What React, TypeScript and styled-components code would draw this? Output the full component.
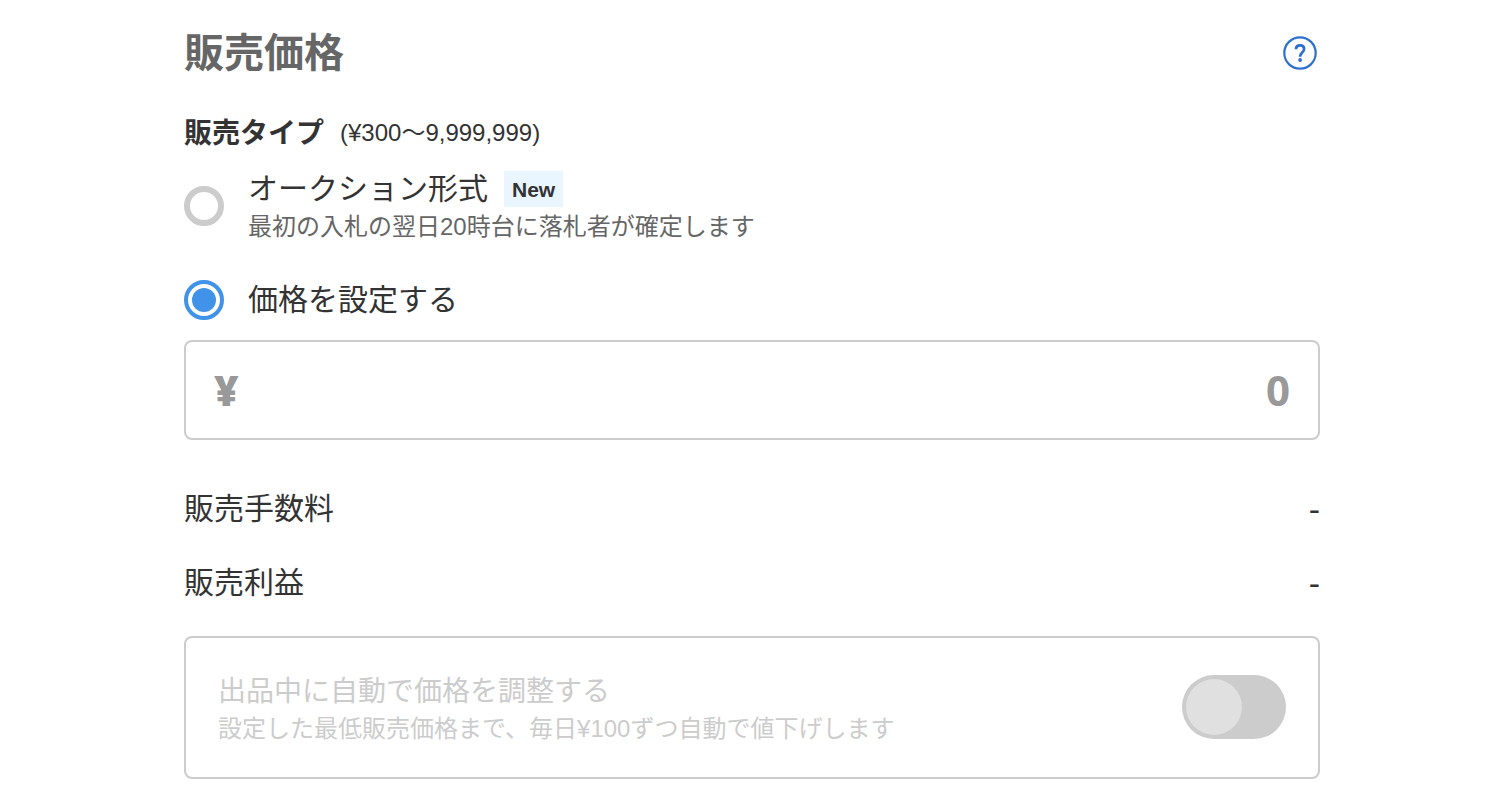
import React, { useState } from "react";
import styled, { createGlobalStyle } from "styled-components";

const GlobalStyle = createGlobalStyle`
  *, *::before, *::after { box-sizing: border-box; }
  body {
    margin: 0;
    background: #fff;
    color: #333;
    font-family: "Liberation Sans", "Noto Sans CJK JP", sans-serif;
    -webkit-font-smoothing: antialiased;
  }
`;

const Page = styled.main`
  padding: 24px 170px 8px 184px;
`;

const Header = styled.header`
  display: flex;
  align-items: center;
  justify-content: space-between;
  height: 58px;
`;

const Title = styled.h2`
  margin: 0;
  font-size: 40px;
  line-height: 58px;
  font-weight: 700;
  color: #666;
`;

const HelpLink = styled.a`
  display: flex;
  color: #2d70ce;
`;

const Fieldset = styled.fieldset`
  margin: 0;
  padding: 0;
  border: 0;
  min-width: 0;
`;

const Legend = styled.legend`
  display: flex;
  align-items: center;
  gap: 16px;
  padding: 32px 0 13px;
  font-size: 28px;
  line-height: 40px;
  font-weight: 700;
`;

const Range = styled.span`
  font-size: 24px;
  line-height: 38px;
  padding-bottom: 2px;
  font-weight: 400;
`;

const Option = styled.label<{ $spaced?: boolean }>`
  display: flex;
  align-items: center;
  gap: 24px;
  margin-bottom: ${(p) => (p.$spaced ? 35 : 20)}px;
  cursor: pointer;
`;

const Radio = styled.input`
  appearance: none;
  flex: none;
  width: 40px;
  height: 40px;
  margin: 0;
  border: 6px solid #ccc;
  border-radius: 50%;
  background: #fff;

  &:checked {
    border: 4px solid #4093e9;
    padding: 4px;
    background: #4093e9 content-box;
  }
`;

const OptionText = styled.span`
  display: flex;
  flex-direction: column;
  padding-top: 2px;
`;

const OptionTitle = styled.span`
  display: flex;
  align-items: center;
  gap: 16px;
  font-size: 30px;
  line-height: 40px;
`;

const Badge = styled.span`
  padding: 2px 8px 0;
  background: #e9f6ff;
  font-size: 21px;
  line-height: 34px;
  font-weight: 700;
`;

const Hint = styled.span`
  font-size: 24px;
  line-height: 36px;
  color: #666;
`;

const PriceField = styled.label`
  display: flex;
  align-items: center;
  height: 100px;
  padding: 0 28px 2px;
  border: 2px solid #ccc;
  border-radius: 8px;
  font-family: "Open Sans", sans-serif;
  font-size: 42px;
  font-weight: 700;
  color: #999;
`;

const Currency = styled.span`
  font-weight: 800;
`;

const PriceInput = styled.input`
  flex: 1;
  min-width: 0;
  height: 60px;
  padding: 0;
  border: 0;
  outline: 0;
  background: transparent;
  color: #333;
  font: inherit;
  text-align: right;

  &::placeholder {
    color: #999;
    opacity: 1;
  }
`;

const Summary = styled.dl`
  display: flex;
  flex-direction: column;
  gap: 30px;
  margin: 47px 0 31px;
  font-size: 30px;
  line-height: 44px;
`;

const SummaryRow = styled.div`
  display: flex;
  justify-content: space-between;
`;

const Term = styled.dt`
  margin: 0;
`;

const Amount = styled.dd`
  margin: 0;
  font-size: 34px;
`;

const AdjustPanel = styled.label`
  display: flex;
  align-items: center;
  justify-content: space-between;
  gap: 32px;
  padding: 30px 32px 31px;
  border: 2px solid #ccc;
  border-radius: 8px;
  color: #ccc;
`;

const AdjustText = styled.span`
  display: flex;
  flex-direction: column;
  padding-top: 4px;
  font-size: 28px;
  line-height: 40px;
`;

const AdjustHint = styled.span`
  font-size: 24px;
  line-height: 34px;
`;

const Switch = styled.input`
  appearance: none;
  flex: none;
  width: 104px;
  height: 64px;
  margin: 0;
  padding: 4px;
  border-radius: 32px;
  background: #ccc;

  &::before {
    content: "";
    display: block;
    width: 56px;
    height: 56px;
    border-radius: 50%;
    background: #e0e0e0;
  }
`;

function HelpIcon() {
  return (
    <svg width="40" height="40" viewBox="0 0 40 40" fill="none" stroke="currentColor" aria-hidden="true">
      <circle cx="20" cy="20" r="15.7" strokeWidth="2.2" />
      <path d="M16 16.300C16 13.900 17.700 12.400 20.100 12.400C22.600 12.400 24.100 13.900 24.100 15.900C24.100 17.700 23.200 18.600 22 19.700C20.700 20.900 20.100 21.600 20.100 23.700" strokeWidth="2.800" />
      <circle cx="20.100" cy="27" r="1.900" fill="currentColor" stroke="none" />
    </svg>
  );
}

export default function App() {
  const [type, setType] = useState("fixed");
  const [price, setPrice] = useState("");

  return (
    <>
      <GlobalStyle />
      <Page>
        <Header>
          <Title>販売価格</Title>
          <HelpLink href="#help" aria-label="ヘルプ">
            <HelpIcon />
          </HelpLink>
        </Header>

        <Fieldset>
          <Legend>
            販売タイプ <Range>(¥300〜9,999,999)</Range>
          </Legend>
          <Option $spaced>
            <Radio
              type="radio"
              name="type"
              checked={type === "auction"}
              onChange={() => setType("auction")}
            />
            <OptionText>
              <OptionTitle>
                オークション形式 <Badge>New</Badge>
              </OptionTitle>
              <Hint>最初の入札の翌日20時台に落札者が確定します</Hint>
            </OptionText>
          </Option>
          <Option>
            <Radio
              type="radio"
              name="type"
              checked={type === "fixed"}
              onChange={() => setType("fixed")}
            />
            <OptionTitle>価格を設定する</OptionTitle>
          </Option>
        </Fieldset>

        <PriceField>
          <Currency>¥</Currency>
          <PriceInput
            inputMode="numeric"
            placeholder="0"
            aria-label="販売価格"
            value={price}
            onChange={(e) => setPrice(e.target.value)}
          />
        </PriceField>

        <Summary>
          <SummaryRow>
            <Term>販売手数料</Term>
            <Amount>-</Amount>
          </SummaryRow>
          <SummaryRow>
            <Term>販売利益</Term>
            <Amount>-</Amount>
          </SummaryRow>
        </Summary>

        <AdjustPanel>
          <AdjustText>
            出品中に自動で価格を調整する
            <AdjustHint>設定した最低販売価格まで、毎日¥100ずつ自動で値下げします</AdjustHint>
          </AdjustText>
          <Switch type="checkbox" role="switch" disabled />
        </AdjustPanel>
      </Page>
    </>
  );
}
